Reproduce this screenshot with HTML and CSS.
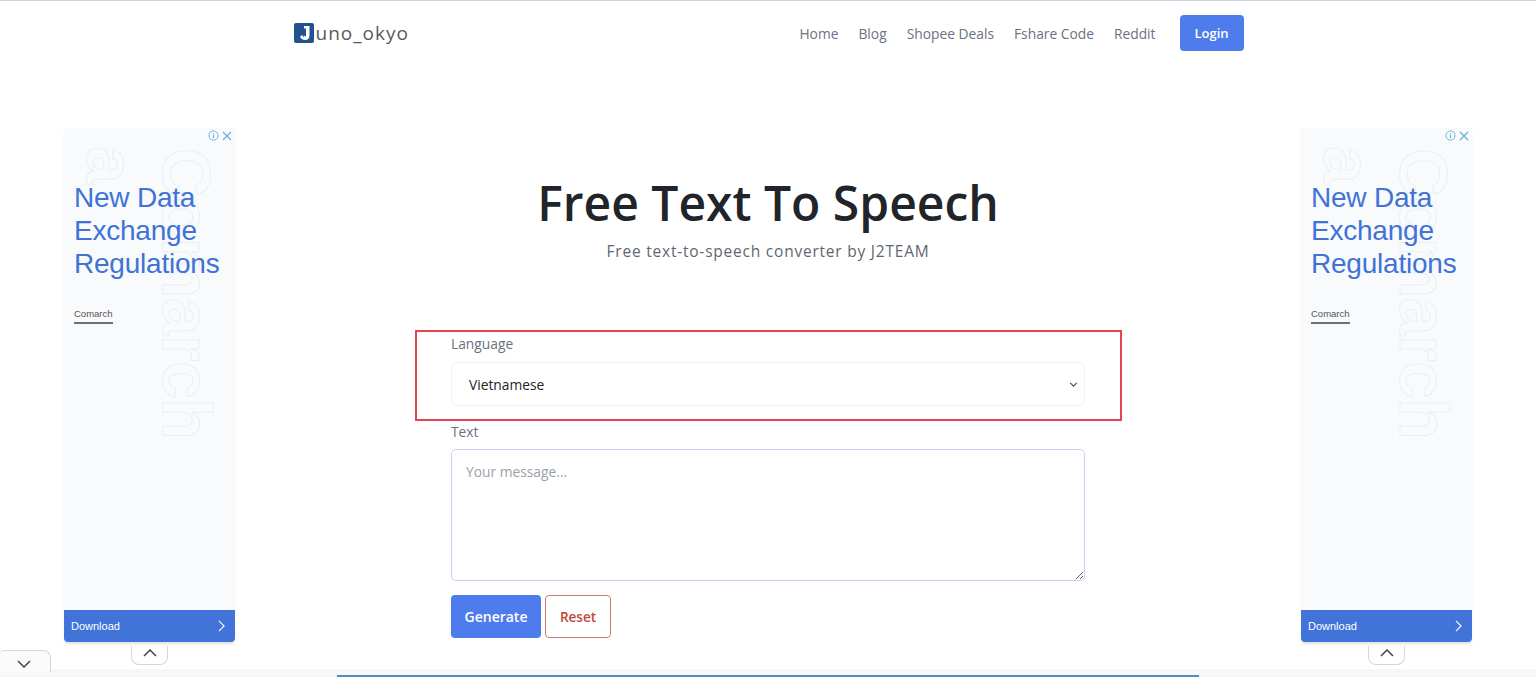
FILE: index.html
```html
<!DOCTYPE html>
<html lang="en">

<head>
    <meta charset="UTF-8">
    <meta name="viewport" content="width=device-width, initial-scale=1.0">
    <title>Free Text To Speech</title>
    <link rel="stylesheet" href="styles.css">
</head>

<body>
    <header class="navbar">
        <a class="brand" href="#">
            <svg class="brand-icon" viewBox="0 0 20 20" width="20" height="20" aria-hidden="true">
                <rect width="20" height="20" rx="2" fill="#23508f"></rect>
                <path d="M10 3h5.500v9.500c0 3-1.800 4.500-4.500 4.500-2.500 0-4.300-1.300-5-3.500l2.500-1.500.8 2.200 1-1.700 1.700 1.200V5.500H10z" fill="#fff"></path>
            </svg>
            <span>uno_okyo</span>
        </a>
        <nav class="nav-links">
            <a href="#">Home</a>
            <a href="#">Blog</a>
            <a href="#">Shopee Deals</a>
            <a href="#">Fshare Code</a>
            <a href="#">Reddit</a>
            <a href="#" class="button button-login">Login</a>
        </nav>
    </header>

    <main class="container">
        <h1>Free Text To Speech</h1>
        <p class="subtitle">Free text-to-speech converter by J2TEAM</p>

        <form class="tts-form">
            <label class="field-label" for="language">Language</label>
            <div class="select-box" id="language">
                <span>Vietnamese</span>
                <svg viewBox="0 0 10 6" width="9" height="5" aria-hidden="true">
                    <path d="M1 1l4 4 4-4" fill="none" stroke="#4b5563" stroke-width="1.400"></path>
                </svg>
            </div>
            <label class="field-label field-label-text" for="message">Text</label>
            <textarea id="message" class="message" placeholder="Your message..."></textarea>
            <div class="actions">
                <button type="button" class="button button-generate">Generate</button>
                <button type="button" class="button button-reset">Reset</button>
            </div>
        </form>
    </main>

    <!-- red annotation round the language field -->
    <div class="highlight"></div>

    <aside class="ad ad-left">
        <div class="ad-marks">
            <svg viewBox="0 0 12 12" width="11" height="11" aria-hidden="true">
                <circle cx="6" cy="6" r="5" fill="none" stroke="#5fb3d9" stroke-width="1"></circle>
                <path d="M6 5.200v3.600M6 3.200v1" stroke="#5fb3d9" stroke-width="1.200"></path>
            </svg>
            <svg viewBox="0 0 10 10" width="10" height="10" aria-hidden="true">
                <path d="M1 1l8 8M9 1l-8 8" stroke="#5fb3d9" stroke-width="1.200"></path>
            </svg>
        </div>
        <div class="ad-ghost ad-ghost-one">Comarch</div>
        <div class="ad-ghost ad-ghost-two">a</div>
        <p class="ad-title">New Data Exchange Regulations</p>
        <p class="ad-brand">Comarch</p>
        <a class="ad-download" href="#">
            <span>Download</span>
            <svg viewBox="0 0 8 14" width="7" height="12" aria-hidden="true">
                <path d="M1 1l6 6-6 6" fill="none" stroke="#fff" stroke-width="1.300"></path>
            </svg>
        </a>
        <div class="ad-tab">
            <svg viewBox="0 0 14 8" width="14" height="8" aria-hidden="true">
                <path d="M1 7l6-6 6 6" fill="none" stroke="#444" stroke-width="1.500"></path>
            </svg>
        </div>
    </aside>

    <aside class="ad ad-right">
        <div class="ad-marks">
            <svg viewBox="0 0 12 12" width="11" height="11" aria-hidden="true">
                <circle cx="6" cy="6" r="5" fill="none" stroke="#5fb3d9" stroke-width="1"></circle>
                <path d="M6 5.200v3.600M6 3.200v1" stroke="#5fb3d9" stroke-width="1.200"></path>
            </svg>
            <svg viewBox="0 0 10 10" width="10" height="10" aria-hidden="true">
                <path d="M1 1l8 8M9 1l-8 8" stroke="#5fb3d9" stroke-width="1.200"></path>
            </svg>
        </div>
        <div class="ad-ghost ad-ghost-one">Comarch</div>
        <div class="ad-ghost ad-ghost-two">a</div>
        <p class="ad-title">New Data Exchange Regulations</p>
        <p class="ad-brand">Comarch</p>
        <a class="ad-download" href="#">
            <span>Download</span>
            <svg viewBox="0 0 8 14" width="7" height="12" aria-hidden="true">
                <path d="M1 1l6 6-6 6" fill="none" stroke="#fff" stroke-width="1.300"></path>
            </svg>
        </a>
        <div class="ad-tab">
            <svg viewBox="0 0 14 8" width="14" height="8" aria-hidden="true">
                <path d="M1 7l6-6 6 6" fill="none" stroke="#444" stroke-width="1.500"></path>
            </svg>
        </div>
    </aside>

    <div class="bottom-bar"><div class="bottom-progress"></div></div>
    <div class="bottom-tab">
        <svg viewBox="0 0 14 8" width="14" height="8" aria-hidden="true">
            <path d="M1 1l6 6 6-6" fill="none" stroke="#444" stroke-width="1.500"></path>
        </svg>
    </div>
</body>

</html>
```

FILE: styles.css
```css
html,
body {
    height: 677px;
    overflow: hidden;
}

body {
    background-color: #fff;
    border-top: 1px solid #c7d6df;
    color: #212529;
    font-family: "Open Sans", Arial, sans-serif;
    margin: 0;
    padding: 0;
    box-sizing: border-box;
}

a {
    text-decoration: none;
}

.navbar {
    width: 950px;
    height: 50px;
    margin: 7px auto 0;
    padding-left: 1px;
    display: flex;
    align-items: center;
    justify-content: space-between;
}

.brand {
    display: flex;
    align-items: center;
    gap: 2px;
    color: #555b63;
    font-size: 19px;
    letter-spacing: 1px;
}

.nav-links {
    display: flex;
    align-items: center;
    gap: 20px;
}

.nav-links a {
    color: #6b7280;
    font-size: 13.8px;
}

.button {
    border: none;
    border-radius: 4px;
    cursor: pointer;
    font-family: inherit;
    font-weight: 600;
    display: inline-block;
}

.nav-links .button-login {
    background-color: #4f7cec;
    color: #fff;
    font-size: 13px;
    width: 64px;
    height: 36px;
    line-height: 36px;
    text-align: center;
    margin-left: 4px;
}

.container {
    width: 634px;
    margin: 0 auto;
    padding-top: 117px;
}

h1 {
    margin: 0 -100px;
    font-size: 48px;
    font-weight: 600;
    line-height: 56px;
    text-align: center;
}

.subtitle {
    margin: 8px 0 0;
    color: #5f6670;
    font-size: 15.5px;
    line-height: 24px;
    letter-spacing: .78px;
    text-align: center;
}

.tts-form {
    margin-top: 71px;
}

.field-label {
    display: block;
    color: #6b7280;
    font-size: 13.8px;
    line-height: 20px;
}

.select-box {
    height: 44px;
    margin-top: 8px;
    padding: 0 6px 0 17px;
    box-sizing: border-box;
    border: 1px solid #eef0f3;
    border-radius: 5px;
    display: flex;
    align-items: center;
    justify-content: space-between;
    font-size: 13.8px;
    color: #212529;
}

.field-label-text {
    margin-top: 16px;
}

.message {
    display: block;
    width: 100%;
    height: 132px;
    margin-top: 7px;
    padding: 12px 14px;
    box-sizing: border-box;
    border: 1px solid #c5d3f3;
    border-radius: 5px;
    font-family: inherit;
    font-size: 13.8px;
    line-height: 20px;
}

.message::placeholder {
    color: #9aa1ab;
}

.actions {
    display: flex;
    gap: 4px;
    margin-top: 14px;
}

.button-generate {
    width: 90px;
    height: 43px;
    background-color: #4f7cec;
    color: #fff;
    font-size: 14px;
}

.button-reset {
    width: 66px;
    height: 43px;
    background-color: #fff;
    border: 1px solid #cf7a70;
    color: #c0483a;
    font-size: 13.5px;
}

.highlight {
    position: absolute;
    left: 415px;
    top: 330px;
    width: 707px;
    height: 91px;
    box-sizing: border-box;
    border: 2px solid #e2454f;
}

.ad {
    position: absolute;
    top: 128px;
    width: 171px;
    height: 514px;
    background-color: #f8fafc;
    box-shadow: 0 3px 3px -1px rgba(0, 0, 0, .12);
    font-family: "Liberation Sans", Arial, sans-serif;
}

.ad-left {
    left: 64px;
}

.ad-right {
    left: 1301px;
}

.ad-marks {
    position: absolute;
    top: 2px;
    right: 3px;
    display: flex;
    align-items: center;
    gap: 3px;
}

.ad-ghost {
    position: absolute;
    color: transparent;
    -webkit-text-stroke: 1px #eceff2;
    font-size: 68px;
    font-weight: 700;
    line-height: 50px;
    white-space: nowrap;
    transform: rotate(90deg);
    transform-origin: left top;
}

.ad-ghost-one {
    left: 148px;
    top: 20px;
    letter-spacing: -.5px;
}

.ad-ghost-two {
    left: 72px;
    top: 18px;
}

.ad-title {
    position: relative;
    margin: 0;
    padding: 53px 0 0 10px;
    width: 150px;
    color: #3f73d8;
    font-size: 28px;
    line-height: 33px;
    letter-spacing: -.22px;
}

.ad-brand {
    position: relative;
    display: inline-block;
    margin: 28px 0 0 10px;
    padding-bottom: 2px;
    border-bottom: 2px solid #6b6f76;
    color: #555;
    font-size: 9.5px;
    line-height: 12px;
}

.ad-download {
    position: absolute;
    left: 0;
    right: 0;
    bottom: 0;
    height: 32px;
    padding: 0 10px 0 7px;
    display: flex;
    align-items: center;
    justify-content: space-between;
    background-color: #4173d9;
    border-radius: 0 0 4px 4px;
    color: #fff;
    font-size: 11px;
}

.ad-tab {
    position: absolute;
    left: 67px;
    top: 518px;
    width: 37px;
    height: 19px;
    box-sizing: border-box;
    padding-top: 3px;
    background-color: #fff;
    border: 1px solid #d6d6d6;
    border-top: none;
    border-radius: 0 0 8px 8px;
    display: flex;
    justify-content: center;
    align-items: flex-start;
}

.bottom-bar {
    position: absolute;
    left: 0;
    right: 0;
    top: 669px;
    height: 8px;
    background-color: #f7f7f7;
}

.bottom-progress {
    position: absolute;
    left: 337px;
    top: 6px;
    width: 862px;
    height: 2px;
    background-color: #5a8ab5;
}

.bottom-tab {
    position: absolute;
    left: 0;
    top: 650px;
    width: 51px;
    height: 22px;
    box-sizing: border-box;
    padding-top: 9px;
    padding-right: 2px;
    background-color: #fbfbfb;
    border: 1px solid #d8d8d8;
    border-left: none;
    border-bottom: none;
    border-radius: 4px 8px 0 0;
    display: flex;
    justify-content: center;
    align-items: flex-start;
}
```
